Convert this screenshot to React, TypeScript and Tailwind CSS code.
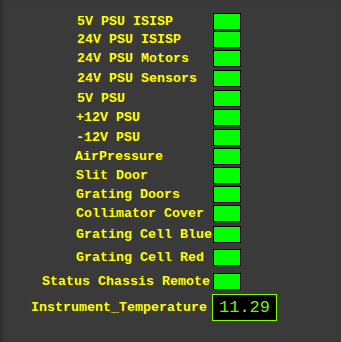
const rows = [
  { label: '5V PSU ISISP', pad: 'pl-[77px]', mt: 'mt-[13px]' },
  { label: '24V PSU ISISP', pad: 'pl-[77px]', mt: 'mt-[1px]' },
  { label: '24V PSU Motors', pad: 'pl-[77px]', mt: 'mt-[2px]' },
  { label: '24V PSU Sensors', pad: 'pl-[77px]', mt: 'mt-[3px]' },
  { label: '5V PSU', pad: 'pl-[77px]', mt: 'mt-[3px]' },
  { label: '+12V PSU', pad: 'pl-[76px]', mt: 'mt-[2px]' },
  { label: '-12V PSU', pad: 'pl-[76px]', mt: 'mt-[3px]' },
  { label: 'AirPressure', pad: 'pl-[75px]', mt: 'mt-[2px]' },
  { label: 'Slit Door', pad: 'pl-[76px]', mt: 'mt-[2px]' },
  { label: 'Grating Doors', pad: 'pl-[76px]', mt: 'mt-[2px]' },
  { label: 'Collimator Cover', pad: 'pl-[76px]', mt: 'mt-[2px]' },
  { label: 'Grating Cell Blue', pad: 'pl-[76px]', mt: 'mt-[4px]' },
  { label: 'Grating Cell Red', pad: 'pl-[76px]', mt: 'mt-[6px]' },
  { label: 'Status Chassis Remote', pad: 'pl-[42px]', mt: 'mt-[7px]' },
]

function Led() {
  return <div className="w-[28px] h-[17px] shrink-0 bg-[#00ff00] border border-black" />
}

export default function App() {
  return (
    <div className="w-[341px] h-[342px] bg-[#3a3a3a] overflow-hidden font-['Liberation_Mono',monospace] shadow-[inset_4px_0_4px_-2px_rgba(0,0,0,0.25)]">
      <div className="flex flex-col">
        {rows.map((r) => (
          <div key={r.label} className={`flex items-center ${r.mt}`}>
            <span
              className={`w-[213px] shrink-0 ${r.pad} whitespace-pre text-[13.33px] leading-none font-bold text-[#ffff00]`}
            >
              {r.label}
            </span>
            <Led />
          </div>
        ))}

        {/* Temperature readout */}
        <div className="flex items-center mt-[4px]">
          <span className="w-[212px] shrink-0 pl-[31px] whitespace-pre text-[13.33px] leading-none font-bold text-[#ffff00]">
            Instrument_Temperature
          </span>
          <div className="w-[65px] h-[27px] flex items-center justify-center bg-black border border-[#80ff00] text-[#78f000] text-[17px] leading-none">
            11.29
          </div>
        </div>
      </div>
    </div>
  )
}
